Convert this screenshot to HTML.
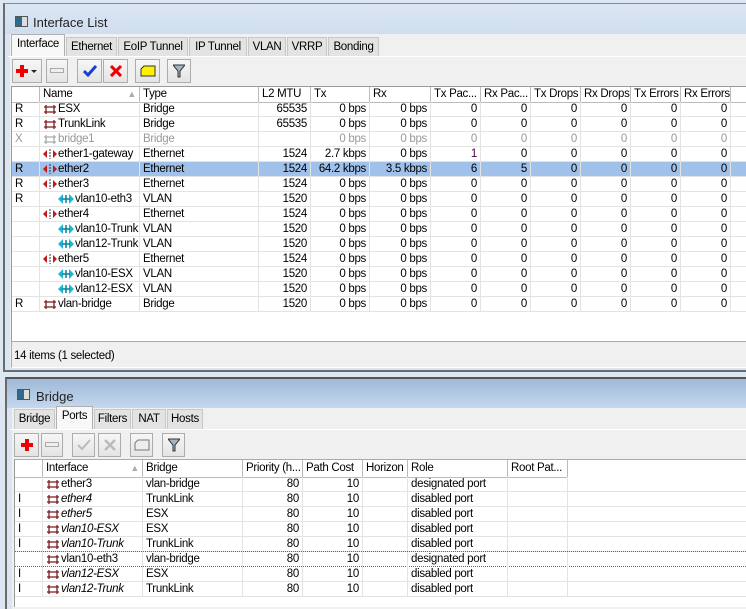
<!DOCTYPE html>
<html><head><meta charset="utf-8"><style>
*{margin:0;padding:0;box-sizing:border-box}
body{width:746px;height:607px;overflow:hidden;background:#dce7f3;font-family:"Liberation Sans",Arial,sans-serif;font-size:11.5px;letter-spacing:-0.3px;color:#000;position:relative}
.abs{position:absolute}
.win{position:absolute;border-left:2px solid #6b6b6b;border-top:1px solid #8a8a8a}
.title{position:absolute;left:0;right:0;top:0;height:30px}
.ttxt{position:absolute;left:28px;top:11px;font-size:13px;letter-spacing:0;color:#222}
.ticon{position:absolute;left:10px;top:12px;width:13px;height:11px;border:1px solid #555;background:linear-gradient(90deg,#2f6a8a 0 55%,#ddd 55%)}
.client{position:absolute;background:#f0f0f0}
.tab{position:absolute;height:20px;border:1px solid #c8c8c8;border-bottom:none;background:#e3e3e3;padding-top:3px;text-align:center;white-space:nowrap}
.tab.sel{background:#f8f8f8;height:23px;border-color:#b0b0b0}
.btn{position:absolute;height:24px;border:1px solid #adadad;background:linear-gradient(#f6f6f6,#e4e4e4);display:flex;align-items:center;justify-content:center}
.grid{position:absolute;background:#fff;border-left:1px solid #999;border-top:1px solid #999}
.row{position:absolute;left:0;height:15px;display:flex;border-bottom:1px solid #e3e3e3;white-space:nowrap}
.row>div{height:15px;line-height:14px;padding:0 3px;border-right:1px solid #e3e3e3;overflow:hidden}
.hdr{background:#fff;border-bottom:1px solid #bbb;height:16px}
.hdr>div{border-right:1px solid #bbb;line-height:15px}
.r{text-align:right}
.sel{background:#9fc1ea}
.gray{color:#999}
.ic{display:inline-block;vertical-align:-2px;margin-right:1px}
i{font-style:italic}
</style></head><body>
<svg width="0" height="0" style="position:absolute"><defs>
<symbol id="br" viewBox="0 0 14 10"><path d="M1 3H13M1 8H13M3 1V10M11 1V10" stroke="#7a1b1b" stroke-width="1.3" fill="none"/></symbol>
<symbol id="brg" viewBox="0 0 14 10"><path d="M1 3H13M1 8H13M3 1V10M11 1V10" stroke="#aaa" stroke-width="1.3" fill="none"/></symbol>
<symbol id="et" viewBox="0 0 14 10"><path d="M0 5L4 1V9Z M14 5L10 1V9Z" fill="#c21818"/><path d="M7 0V10" stroke="#333" stroke-dasharray="2 1"/></symbol>
<symbol id="vl" viewBox="0 0 16 10"><path d="M0 5L5 0V10Z M16 5L11 0V10Z" fill="#1ab8d0"/><path d="M4 5H12M8 1V9" stroke="#0a7f99" stroke-width="1.5"/></symbol>
</defs></svg>

<div class="win" style="left:3px;top:3px;width:743px;height:369px;background:#d9e5f2;border-bottom:2px solid #6b6b6b">
 <div class="title" style="background:linear-gradient(#dbe6f3,#cfdeef)"><div class="ticon"></div><div class="ttxt">Interface List</div></div>
 <div class="client" style="left:5px;top:30px;right:0;bottom:3px"></div>
</div>
<div class="tab sel abs" style="left:11px;top:34px;width:54px">Interface</div>
<div class="tab abs" style="left:66px;top:37px;width:51px">Ethernet</div>
<div class="tab abs" style="left:118px;top:37px;width:70px">EoIP Tunnel</div>
<div class="tab abs" style="left:189px;top:37px;width:58px">IP Tunnel</div>
<div class="tab abs" style="left:248px;top:37px;width:38px">VLAN</div>
<div class="tab abs" style="left:287px;top:37px;width:40px">VRRP</div>
<div class="tab abs" style="left:328px;top:37px;width:51px">Bonding</div>
<div class="abs" style="left:8px;top:56px;width:738px;height:1px;background:#fff"></div>

<div class="btn" style="left:12px;top:59px;width:30px"><svg width="22" height="14"><path d="M6 1V13M0 7H12" stroke="#e00" stroke-width="4"/><path d="M15 6H21L18 9Z" fill="#222"/></svg></div>
<div class="btn" style="left:46px;top:59px;width:22px"><svg width="14" height="6"><rect x="0.5" y="0.5" width="13" height="4" fill="#eee" stroke="#aaa"/></svg></div>
<div class="btn" style="left:77px;top:59px;width:25px"><svg width="14" height="12"><path d="M1 6L5 10L13 1" stroke="#1a3fd0" stroke-width="3" fill="none"/></svg></div>
<div class="btn" style="left:103px;top:59px;width:25px"><svg width="12" height="12"><path d="M1 1L11 11M11 1L1 11" stroke="#e00" stroke-width="3"/></svg></div>
<div class="btn" style="left:135px;top:59px;width:25px"><svg width="16" height="12"><path d="M1 4L4 1H15V11H1Z" fill="#ffef00" stroke="#333"/></svg></div>
<div class="btn" style="left:167px;top:59px;width:24px"><svg width="12" height="14"><path d="M0 1H12L7 7V13H5V7Z" fill="#9fb5c8" stroke="#333"/></svg></div>

<div class="grid" style="left:11px;top:86px;width:735px;height:255px">
 <div class="row hdr" style="top:0"><div style="width:28px"></div><div style="width:100px">Name<span style="float:right;color:#aaa;font-size:9px">▲</span></div><div style="width:119px">Type</div><div style="width:52px">L2 MTU</div><div style="width:59px">Tx</div><div style="width:61px">Rx</div><div style="width:50px">Tx Pac...</div><div style="width:50px">Rx Pac...</div><div style="width:50px">Tx Drops</div><div style="width:50px">Rx Drops</div><div style="width:50px">Tx Errors</div><div style="width:50px">Rx Errors</div><div style="width:20px;border:none"></div></div>
</div>

<div class="abs" style="left:12px;top:102px;width:734px">
<div class="row" style="top:0"><div style="width:28px">R</div><div style="width:100px"><svg class="ic" width="14" height="10"><use href="#br"/></svg>ESX</div><div style="width:119px">Bridge</div><div class="r" style="width:52px">65535</div><div class="r" style="width:59px">0 bps</div><div class="r" style="width:61px">0 bps</div><div class="r" style="width:50px">0</div><div class="r" style="width:50px">0</div><div class="r" style="width:50px">0</div><div class="r" style="width:50px">0</div><div class="r" style="width:50px">0</div><div class="r" style="width:50px">0</div><div style="width:20px"></div></div>
<div class="row" style="top:15px"><div style="width:28px">R</div><div style="width:100px"><svg class="ic" width="14" height="10"><use href="#br"/></svg>TrunkLink</div><div style="width:119px">Bridge</div><div class="r" style="width:52px">65535</div><div class="r" style="width:59px">0 bps</div><div class="r" style="width:61px">0 bps</div><div class="r" style="width:50px">0</div><div class="r" style="width:50px">0</div><div class="r" style="width:50px">0</div><div class="r" style="width:50px">0</div><div class="r" style="width:50px">0</div><div class="r" style="width:50px">0</div><div style="width:20px"></div></div>
<div class="row gray" style="top:30px"><div style="width:28px">X</div><div style="width:100px"><svg class="ic" width="14" height="10"><use href="#brg"/></svg>bridge1</div><div style="width:119px">Bridge</div><div class="r" style="width:52px"></div><div class="r" style="width:59px">0 bps</div><div class="r" style="width:61px">0 bps</div><div class="r" style="width:50px">0</div><div class="r" style="width:50px">0</div><div class="r" style="width:50px">0</div><div class="r" style="width:50px">0</div><div class="r" style="width:50px">0</div><div class="r" style="width:50px">0</div><div style="width:20px"></div></div>
<div class="row" style="top:45px"><div style="width:28px"></div><div style="width:100px"><svg class="ic" width="14" height="10"><use href="#et"/></svg>ether1-gateway</div><div style="width:119px">Ethernet</div><div class="r" style="width:52px">1524</div><div class="r" style="width:59px">2.7 kbps</div><div class="r" style="width:61px">0 bps</div><div class="r" style="width:50px;color:#500040">1</div><div class="r" style="width:50px">0</div><div class="r" style="width:50px">0</div><div class="r" style="width:50px">0</div><div class="r" style="width:50px">0</div><div class="r" style="width:50px">0</div><div style="width:20px"></div></div>
<div class="row sel" style="top:60px"><div style="width:28px">R</div><div style="width:100px"><svg class="ic" width="14" height="10"><use href="#et"/></svg>ether2</div><div style="width:119px">Ethernet</div><div class="r" style="width:52px">1524</div><div class="r" style="width:59px">64.2 kbps</div><div class="r" style="width:61px">3.5 kbps</div><div class="r" style="width:50px">6</div><div class="r" style="width:50px">5</div><div class="r" style="width:50px">0</div><div class="r" style="width:50px">0</div><div class="r" style="width:50px">0</div><div class="r" style="width:50px">0</div><div style="width:20px"></div></div>
<div class="row" style="top:75px"><div style="width:28px">R</div><div style="width:100px"><svg class="ic" width="14" height="10"><use href="#et"/></svg>ether3</div><div style="width:119px">Ethernet</div><div class="r" style="width:52px">1524</div><div class="r" style="width:59px">0 bps</div><div class="r" style="width:61px">0 bps</div><div class="r" style="width:50px">0</div><div class="r" style="width:50px">0</div><div class="r" style="width:50px">0</div><div class="r" style="width:50px">0</div><div class="r" style="width:50px">0</div><div class="r" style="width:50px">0</div><div style="width:20px"></div></div>
<div class="row" style="top:90px"><div style="width:28px">R</div><div style="width:100px;padding-left:18px"><svg class="ic" width="16" height="10"><use href="#vl"/></svg>vlan10-eth3</div><div style="width:119px">VLAN</div><div class="r" style="width:52px">1520</div><div class="r" style="width:59px">0 bps</div><div class="r" style="width:61px">0 bps</div><div class="r" style="width:50px">0</div><div class="r" style="width:50px">0</div><div class="r" style="width:50px">0</div><div class="r" style="width:50px">0</div><div class="r" style="width:50px">0</div><div class="r" style="width:50px">0</div><div style="width:20px"></div></div>
<div class="row" style="top:105px"><div style="width:28px"></div><div style="width:100px"><svg class="ic" width="14" height="10"><use href="#et"/></svg>ether4</div><div style="width:119px">Ethernet</div><div class="r" style="width:52px">1524</div><div class="r" style="width:59px">0 bps</div><div class="r" style="width:61px">0 bps</div><div class="r" style="width:50px">0</div><div class="r" style="width:50px">0</div><div class="r" style="width:50px">0</div><div class="r" style="width:50px">0</div><div class="r" style="width:50px">0</div><div class="r" style="width:50px">0</div><div style="width:20px"></div></div>
<div class="row" style="top:120px"><div style="width:28px"></div><div style="width:100px;padding-left:18px"><svg class="ic" width="16" height="10"><use href="#vl"/></svg>vlan10-Trunk</div><div style="width:119px">VLAN</div><div class="r" style="width:52px">1520</div><div class="r" style="width:59px">0 bps</div><div class="r" style="width:61px">0 bps</div><div class="r" style="width:50px">0</div><div class="r" style="width:50px">0</div><div class="r" style="width:50px">0</div><div class="r" style="width:50px">0</div><div class="r" style="width:50px">0</div><div class="r" style="width:50px">0</div><div style="width:20px"></div></div>
<div class="row" style="top:135px"><div style="width:28px"></div><div style="width:100px;padding-left:18px"><svg class="ic" width="16" height="10"><use href="#vl"/></svg>vlan12-Trunk</div><div style="width:119px">VLAN</div><div class="r" style="width:52px">1520</div><div class="r" style="width:59px">0 bps</div><div class="r" style="width:61px">0 bps</div><div class="r" style="width:50px">0</div><div class="r" style="width:50px">0</div><div class="r" style="width:50px">0</div><div class="r" style="width:50px">0</div><div class="r" style="width:50px">0</div><div class="r" style="width:50px">0</div><div style="width:20px"></div></div>
<div class="row" style="top:150px"><div style="width:28px"></div><div style="width:100px"><svg class="ic" width="14" height="10"><use href="#et"/></svg>ether5</div><div style="width:119px">Ethernet</div><div class="r" style="width:52px">1524</div><div class="r" style="width:59px">0 bps</div><div class="r" style="width:61px">0 bps</div><div class="r" style="width:50px">0</div><div class="r" style="width:50px">0</div><div class="r" style="width:50px">0</div><div class="r" style="width:50px">0</div><div class="r" style="width:50px">0</div><div class="r" style="width:50px">0</div><div style="width:20px"></div></div>
<div class="row" style="top:165px"><div style="width:28px"></div><div style="width:100px;padding-left:18px"><svg class="ic" width="16" height="10"><use href="#vl"/></svg>vlan10-ESX</div><div style="width:119px">VLAN</div><div class="r" style="width:52px">1520</div><div class="r" style="width:59px">0 bps</div><div class="r" style="width:61px">0 bps</div><div class="r" style="width:50px">0</div><div class="r" style="width:50px">0</div><div class="r" style="width:50px">0</div><div class="r" style="width:50px">0</div><div class="r" style="width:50px">0</div><div class="r" style="width:50px">0</div><div style="width:20px"></div></div>
<div class="row" style="top:180px"><div style="width:28px"></div><div style="width:100px;padding-left:18px"><svg class="ic" width="16" height="10"><use href="#vl"/></svg>vlan12-ESX</div><div style="width:119px">VLAN</div><div class="r" style="width:52px">1520</div><div class="r" style="width:59px">0 bps</div><div class="r" style="width:61px">0 bps</div><div class="r" style="width:50px">0</div><div class="r" style="width:50px">0</div><div class="r" style="width:50px">0</div><div class="r" style="width:50px">0</div><div class="r" style="width:50px">0</div><div class="r" style="width:50px">0</div><div style="width:20px"></div></div>
<div class="row" style="top:195px"><div style="width:28px">R</div><div style="width:100px"><svg class="ic" width="14" height="10"><use href="#br"/></svg>vlan-bridge</div><div style="width:119px">Bridge</div><div class="r" style="width:52px">1520</div><div class="r" style="width:59px">0 bps</div><div class="r" style="width:61px">0 bps</div><div class="r" style="width:50px">0</div><div class="r" style="width:50px">0</div><div class="r" style="width:50px">0</div><div class="r" style="width:50px">0</div><div class="r" style="width:50px">0</div><div class="r" style="width:50px">0</div><div style="width:20px"></div></div>
</div>
<div class="abs" style="left:11px;top:341px;width:735px;height:27px;background:#f0f0f0;border-top:1px solid #aaa;border-left:1px solid #aaa;border-bottom:1px solid #fff;padding:8px 0 0 2px">14 items (1 selected)</div>

<div class="win" style="left:5px;top:377px;width:741px;height:232px;background:#d9e5f2;border-top:2px solid #555">
 <div class="title" style="height:29px;background:linear-gradient(#9fb9d7,#c4d8ee)"><div class="ticon" style="top:10px"></div><div class="ttxt" style="left:29px;top:10px">Bridge</div></div>
 <div class="client" style="left:5px;top:29px;right:0;bottom:0"></div>
</div>
<div class="tab abs" style="left:14px;top:409px;width:41px">Bridge</div>
<div class="tab sel abs" style="left:56px;top:406px;width:37px">Ports</div>
<div class="tab abs" style="left:94px;top:409px;width:37px">Filters</div>
<div class="tab abs" style="left:132px;top:409px;width:34px">NAT</div>
<div class="tab abs" style="left:167px;top:409px;width:36px">Hosts</div>
<div class="abs" style="left:10px;top:429px;width:736px;height:1px;background:#fff"></div>

<div class="btn" style="left:14px;top:433px;width:25px"><svg width="14" height="14"><path d="M7 1V13M1 7H13" stroke="#e00" stroke-width="4"/></svg></div>
<div class="btn" style="left:41px;top:433px;width:22px"><svg width="14" height="6"><rect x="0.5" y="0.5" width="13" height="4" fill="#eee" stroke="#aaa"/></svg></div>
<div class="btn" style="left:72px;top:433px;width:23px"><svg width="14" height="12"><path d="M1 6L5 10L13 1" stroke="#bbb" stroke-width="2" fill="none"/></svg></div>
<div class="btn" style="left:98px;top:433px;width:23px"><svg width="12" height="12"><path d="M1 1L11 11M11 1L1 11" stroke="#bbb" stroke-width="2.5"/></svg></div>
<div class="btn" style="left:130px;top:433px;width:23px"><svg width="16" height="12"><path d="M1 4L4 1H15V11H1Z" fill="#eee" stroke="#777"/></svg></div>
<div class="btn" style="left:162px;top:433px;width:23px"><svg width="12" height="14"><path d="M0 1H12L7 7V13H5V7Z" fill="#9fb5c8" stroke="#333"/></svg></div>

<div class="grid" style="left:14px;top:459px;width:732px;height:148px;border-top-color:#aaa">
 <div class="row hdr" style="top:0;height:18px"><div style="width:28px;height:17px"></div><div style="width:100px;height:17px;line-height:17px">Interface<span style="float:right;color:#aaa;font-size:9px">▲</span></div><div style="width:100px;height:17px;line-height:17px">Bridge</div><div style="width:60px;height:17px;line-height:17px">Priority (h...</div><div style="width:60px;height:17px;line-height:17px">Path Cost</div><div style="width:45px;height:17px;line-height:17px">Horizon</div><div style="width:100px;height:17px;line-height:17px">Role</div><div style="width:60px;height:17px;line-height:17px">Root Pat...</div></div>
</div>
<div class="abs" style="left:15px;top:477px;width:731px">
<div class="row" style="top:0;width:731px"><div style="width:28px"></div><div style="width:100px"><svg class="ic" width="14" height="10"><use href="#br"/></svg>ether3</div><div style="width:100px">vlan-bridge</div><div class="r" style="width:60px">80</div><div class="r" style="width:60px">10</div><div style="width:45px"></div><div style="width:100px">designated port</div><div style="width:60px"></div></div>
<div class="row" style="top:15px;width:731px"><div style="width:28px">I</div><div style="width:100px"><svg class="ic" width="14" height="10"><use href="#br"/></svg><i>ether4</i></div><div style="width:100px">TrunkLink</div><div class="r" style="width:60px">80</div><div class="r" style="width:60px">10</div><div style="width:45px"></div><div style="width:100px">disabled port</div><div style="width:60px"></div></div>
<div class="row" style="top:30px;width:731px"><div style="width:28px">I</div><div style="width:100px"><svg class="ic" width="14" height="10"><use href="#br"/></svg><i>ether5</i></div><div style="width:100px">ESX</div><div class="r" style="width:60px">80</div><div class="r" style="width:60px">10</div><div style="width:45px"></div><div style="width:100px">disabled port</div><div style="width:60px"></div></div>
<div class="row" style="top:45px;width:731px"><div style="width:28px">I</div><div style="width:100px"><svg class="ic" width="14" height="10"><use href="#br"/></svg><i>vlan10-ESX</i></div><div style="width:100px">ESX</div><div class="r" style="width:60px">80</div><div class="r" style="width:60px">10</div><div style="width:45px"></div><div style="width:100px">disabled port</div><div style="width:60px"></div></div>
<div class="row" style="top:60px;width:731px"><div style="width:28px">I</div><div style="width:100px"><svg class="ic" width="14" height="10"><use href="#br"/></svg><i>vlan10-Trunk</i></div><div style="width:100px">TrunkLink</div><div class="r" style="width:60px">80</div><div class="r" style="width:60px">10</div><div style="width:45px"></div><div style="width:100px">disabled port</div><div style="width:60px"></div></div>
<div class="row" style="top:75px;width:731px;border-top:1px dotted #666;border-bottom:1px dotted #666;height:16px;margin-top:-1px"><div style="width:28px"></div><div style="width:100px"><svg class="ic" width="14" height="10"><use href="#br"/></svg>vlan10-eth3</div><div style="width:100px">vlan-bridge</div><div class="r" style="width:60px">80</div><div class="r" style="width:60px">10</div><div style="width:45px"></div><div style="width:100px">designated port</div><div style="width:60px"></div></div>
<div class="row" style="top:90px;width:731px"><div style="width:28px">I</div><div style="width:100px"><svg class="ic" width="14" height="10"><use href="#br"/></svg><i>vlan12-ESX</i></div><div style="width:100px">ESX</div><div class="r" style="width:60px">80</div><div class="r" style="width:60px">10</div><div style="width:45px"></div><div style="width:100px">disabled port</div><div style="width:60px"></div></div>
<div class="row" style="top:105px;width:731px"><div style="width:28px">I</div><div style="width:100px"><svg class="ic" width="14" height="10"><use href="#br"/></svg><i>vlan12-Trunk</i></div><div style="width:100px">TrunkLink</div><div class="r" style="width:60px">80</div><div class="r" style="width:60px">10</div><div style="width:45px"></div><div style="width:100px">disabled port</div><div style="width:60px"></div></div>
</div>
</body></html>
